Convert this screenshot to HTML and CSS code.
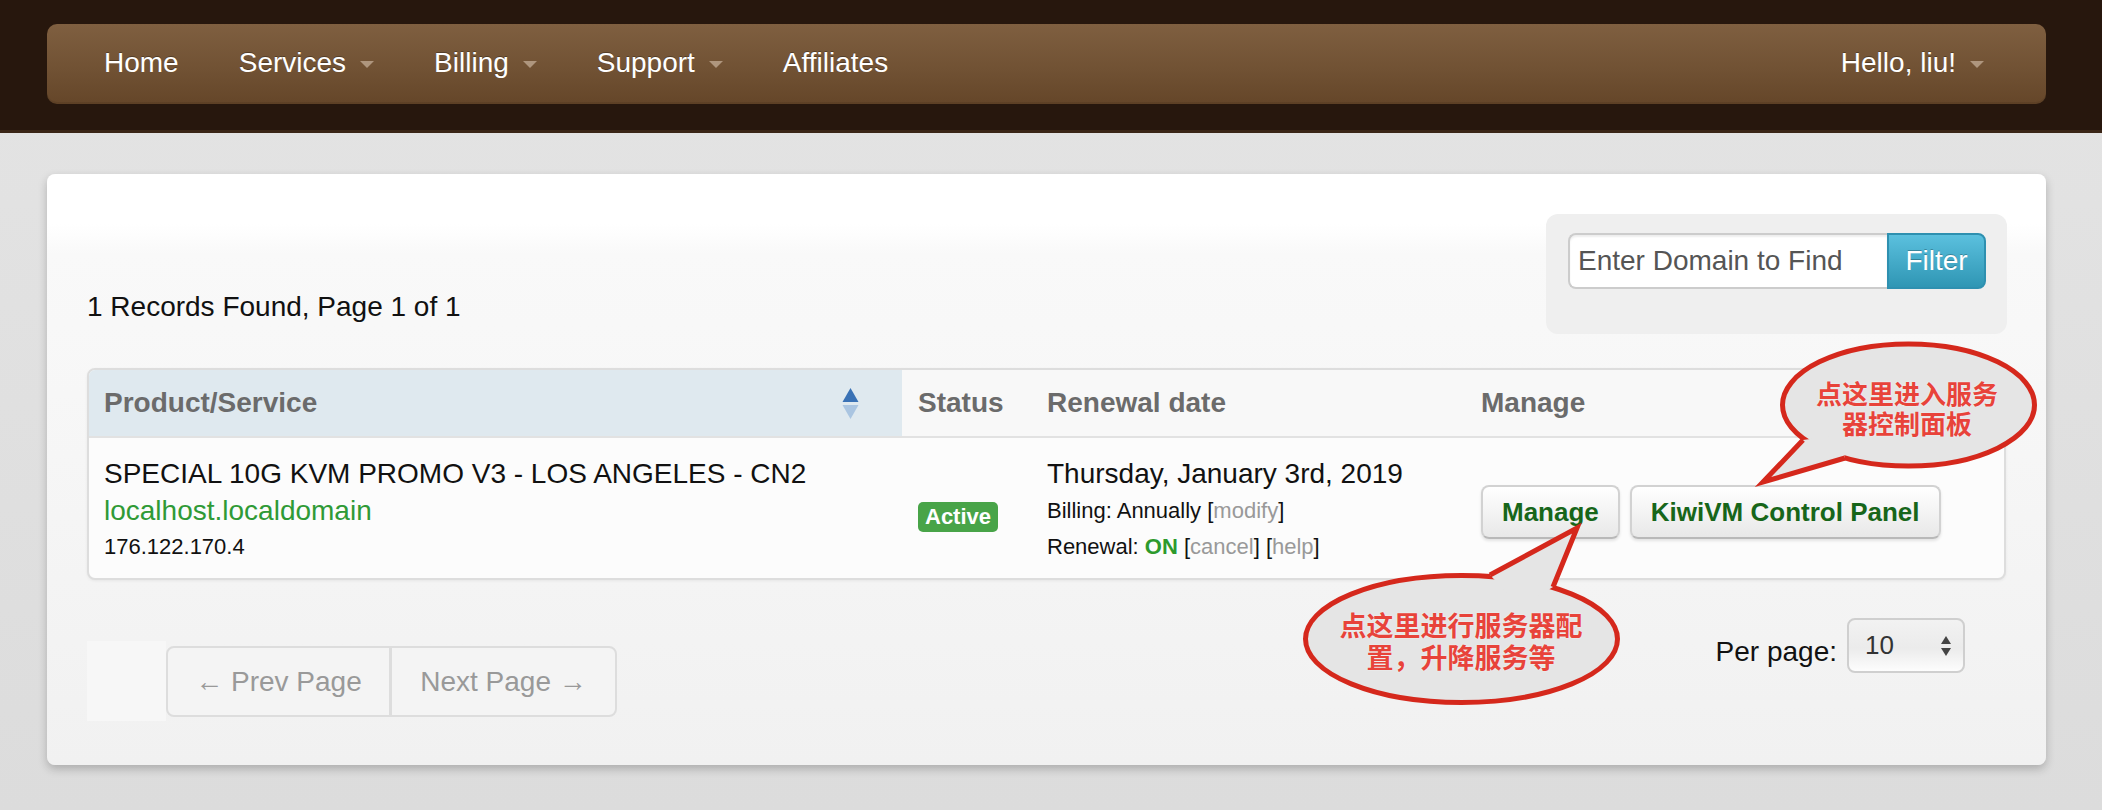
FILE: index.html
```html
<!DOCTYPE html>
<html>
<head>
<meta charset="utf-8">
<title>My Services</title>
<link rel="stylesheet" href="styles.css">
</head>
<body>
<header class="topbar">
  <nav class="navbar">
    <ul class="nav">
      <li><a>Home</a></li>
      <li><a>Services<span class="caret"></span></a></li>
      <li><a>Billing<span class="caret"></span></a></li>
      <li><a>Support<span class="caret"></span></a></li>
      <li><a>Affiliates</a></li>
    </ul>
    <ul class="nav">
      <li><a>Hello, liu!<span class="caret"></span></a></li>
    </ul>
  </nav>
</header>

<main class="card">
  <div class="toolbar">
    <p class="records">1 Records Found, Page 1 of 1</p>
    <div class="filter-box">
      <div class="filter">
        <span class="filter-input">Enter Domain to Find</span>
        <span class="filter-btn">Filter</span>
      </div>
    </div>
  </div>

  <table class="services">
    <colgroup>
      <col class="c-product"><col class="c-status"><col class="c-renewal"><col class="c-manage">
    </colgroup>
    <thead>
      <tr>
        <th class="sorted"><div class="th-inner"><span>Product/Service</span>
          <svg class="sort" width="21" height="33" viewBox="0 0 21 33"><path d="M10.5 1 L18.5 15 H2.5 Z" fill="#3a72b5"/><path d="M2.5 18 H18.5 L10.5 32 Z" fill="#aac5e1"/></svg></div></th>
        <th>Status</th>
        <th>Renewal date</th>
        <th>Manage</th>
      </tr>
    </thead>
    <tbody>
      <tr>
        <td class="product">
          <div class="l-big">SPECIAL 10G KVM PROMO V3 - LOS ANGELES - CN2</div>
          <div class="l-mid host">localhost.localdomain</div>
          <div class="l-small">176.122.170.4</div>
        </td>
        <td class="status"><span class="badge">Active</span></td>
        <td class="renewal">
          <div class="l-big">Thursday, January 3rd, 2019</div>
          <div class="l-mid small">Billing: Annually [<span class="muted">modify</span>]</div>
          <div class="l-small">Renewal: <b class="on">ON</b> [<span class="muted">cancel</span>] [<span class="muted">help</span>]</div>
        </td>
        <td class="manage">
          <div class="btns"><span class="btn">Manage</span><span class="btn">KiwiVM Control Panel</span></div>
        </td>
      </tr>
    </tbody>
  </table>

  <div class="footer-row">
    <div class="pager">
      <span class="pager-spacer"></span>
      <span class="pager-btn prev">← Prev Page</span>
      <span class="pager-btn next">Next Page →</span>
    </div>
    <div class="per-page">
      <span class="per-page-label">Per page:</span>
      <div class="select"><span>10</span>
        <svg width="12" height="22" viewBox="0 0 12 22"><path d="M6 1 L11 9 H1 Z" fill="#444"/><path d="M1 13 H11 L6 21 Z" fill="#444"/></svg>
      </div>
    </div>
  </div>
</main>

<div class="bubble bubble-1">
  <svg width="295" height="160" viewBox="0 0 295 160">
    <ellipse cx="158.5" cy="70" rx="126" ry="61" fill="#e5e5e5" stroke="#d5281c" stroke-width="5"/>
    <path d="M53 105 L13 147 L95 123 L90 100 Z" fill="#e5e5e5"/>
    <path d="M53 105 L13 147 L95 123" fill="none" stroke="#d5281c" stroke-width="5" stroke-linejoin="miter"/>
  </svg>
  <div class="bubble-text">点这里进入服务<br>器控制面板</div>
</div>

<div class="bubble bubble-2">
  <svg width="340" height="200" viewBox="0 0 340 200">
    <ellipse cx="166.5" cy="124" rx="156" ry="63.5" fill="#e5e5e5" stroke="#d5281c" stroke-width="5"/>
    <path d="M195 60 L282 13 L258 72 L225 92 Z" fill="#e5e5e5"/>
    <path d="M195 60 L282 13 L258 72" fill="none" stroke="#d5281c" stroke-width="5" stroke-linejoin="miter"/>
  </svg>
  <div class="bubble-text">点这里进行服务器配<br>置，升降服务等</div>
</div>
</body>
</html>
```

FILE: styles.css
```css
* { box-sizing: border-box; }
html, body { margin: 0; padding: 0; }
body {
  position: relative;
  width: 2102px;
  height: 810px;
  overflow: hidden;
  background: linear-gradient(#e4e4e4, #dcdcdc);
  font-family: "Liberation Sans", Arial, "Noto Sans CJK SC", sans-serif;
  color: #111;
}

/* ---------- top bar ---------- */
.topbar {
  height: 133px;
  background: #27170d;
  border-bottom: 3px solid #3a2516;
  padding: 24px 56px 0 47px;
}
.navbar {
  height: 80px;
  border-radius: 10px;
  background: linear-gradient(#7f5f40, #715234 55%, #654629);
  box-shadow: inset 0 -2px 0 rgba(0,0,0,0.08);
  display: flex;
  justify-content: space-between;
  padding: 0 32px 0 27px;
}
.nav { list-style: none; margin: 0; padding: 0; display: flex; }
.nav a {
  display: block;
  padding: 0 30px;
  font-size: 28px;
  line-height: 77px;
  color: #fff;
  text-shadow: 0 -1px 0 rgba(0,0,0,0.3);
}
.caret {
  display: inline-block;
  width: 0; height: 0;
  border-top: 7px solid rgba(215,195,175,0.6);
  border-left: 7px solid transparent;
  border-right: 7px solid transparent;
  margin-left: 14px;
  vertical-align: middle;
}

/* ---------- card ---------- */
.card {
  margin: 41px 56px 0 47px;
  height: 591px;
  border-radius: 8px;
  background: linear-gradient(#ffffff 0, #ffffff 50px, #f9f9f9 80px, #f7f7f7 220px, #f1f1f1 100%);
  box-shadow: 0 4px 10px rgba(0,0,0,0.22);
  padding: 40px 40px 0 40px;
}
.toolbar {
  display: flex;
  justify-content: space-between;
  align-items: flex-end;
  margin-bottom: 34px;
}
.records { margin: 0 0 7px; font-size: 28px; line-height: 40px; }
.filter-box {
  width: 461px;
  height: 120px;
  margin-right: -1px;
  background: #efefef;
  border-radius: 12px;
  padding: 19px 0 0 22px;
}
.filter { display: flex; }
.filter-input {
  width: 319px; height: 56px;
  border: 2px solid #cccccc;
  border-right: 0;
  border-radius: 8px 0 0 8px;
  background: #fff;
  box-shadow: inset 0 2px 2px rgba(0,0,0,0.07);
  font-size: 28px;
  line-height: 52px;
  padding-left: 8px;
  color: #555;
}
.filter-btn {
  width: 99px; height: 56px;
  border: 2px solid #2e90b0;
  border-radius: 0 8px 8px 0;
  background: linear-gradient(#5bc0de, #2f96b4);
  color: #fff;
  font-size: 28px;
  line-height: 52px;
  text-align: center;
  text-shadow: 0 -1px 0 rgba(0,0,0,0.25);
}

/* ---------- table ---------- */
.services {
  width: 1919px;
  border-collapse: separate;
  border-spacing: 0;
  border: 2px solid #dddddd;
  border-radius: 8px;
  table-layout: fixed;
  background: #fcfcfc;
  box-shadow: 0 1px 3px rgba(0,0,0,0.06);
}
.c-product { width: 813px; }
.c-status { width: 129px; }
.c-renewal { width: 434px; }
.c-manage { width: 539px; }
.services th {
  height: 68px;
  padding: 0 16px;
  text-align: left;
  font-size: 28px;
  font-weight: bold;
  color: #6b6b6b;
  background: #f8f8f8;
  border-bottom: 2px solid #e2e2e2;
  vertical-align: middle;
}
.services th:last-child { border-top-right-radius: 6px; }
.services th.sorted {
  background: #dfe9ef;
  border-top-left-radius: 6px;
  padding: 0 41px 0 15px;
}
.th-inner { display: flex; justify-content: space-between; align-items: center; }
.sort { display: block; }
.services td {
  height: 140px;
  padding: 17px 16px 13px;
  vertical-align: middle;
  font-size: 28px;
}
.services td.product { padding-left: 15px; }
.services td.status { padding-top: 27px; }
.services td.manage { padding-top: 21px; }
.l-big { line-height: 38px; font-size: 28px; }
.l-mid { line-height: 36px; font-size: 28px; }
.l-mid.small { font-size: 22px; }
.l-small { line-height: 36px; font-size: 22px; }
.host { color: #2f9a36; }
.muted { color: #999; }
.on { color: #2d9a2d; }
.badge {
  display: inline-block;
  height: 30px;
  padding: 0 7px;
  background: #48a448;
  color: #fff;
  font-weight: bold;
  font-size: 22px;
  line-height: 30px;
  border-radius: 5px;
}
.btns { display: flex; gap: 10px; }
.btn {
  display: inline-block;
  height: 54px;
  padding: 0 19px;
  border: 2px solid #d2d2d2;
  border-bottom-color: #b9b9b9;
  border-radius: 8px;
  background: linear-gradient(#ffffff, #e8e8e8);
  box-shadow: inset 0 2px 0 rgba(255,255,255,0.4), 0 2px 3px rgba(0,0,0,0.1);
  font-size: 26px;
  font-weight: bold;
  line-height: 50px;
  color: #17661a;
  white-space: nowrap;
}

/* ---------- footer ---------- */
.footer-row {
  display: flex;
  justify-content: space-between;
  align-items: flex-start;
}
.pager { display: flex; align-items: center; margin-top: 61px; }
.pager-spacer { width: 79px; height: 80px; background: #f7f7f7; }
.pager-btn {
  width: 225px;
  height: 71px;
  border: 2px solid #dddddd;
  background: #f4f4f4;
  color: #999;
  font-size: 28px;
  line-height: 67px;
  text-align: center;
}
.pager-btn.prev { border-radius: 8px 0 0 8px; }
.pager-btn.next { width: 226px; border-left-width: 1px; border-radius: 0 8px 8px 0; }
.per-page { display: flex; align-items: flex-start; margin-top: 38px; margin-right: 41px; }
.per-page-label { font-size: 28px; line-height: 40px; margin-top: 14px; margin-right: 10px; }
.select {
  width: 118px;
  height: 55px;
  border: 2px solid #cfcfcf;
  border-radius: 8px;
  background: linear-gradient(#f2f2f2, #ebebeb 55%, #fdfdfd);
  display: flex;
  align-items: center;
  justify-content: space-between;
  padding: 0 11px 0 16px;
  font-size: 26px;
  color: #333;
}
.select svg { display: block; }

/* ---------- annotation bubbles ---------- */
.bubble { position: absolute; z-index: 5; }
.bubble svg { display: block; }
.bubble-1 { left: 1750px; top: 335px; width: 295px; height: 160px; }
.bubble-2 { left: 1295px; top: 515px; width: 340px; height: 200px; }
.bubble-text {
  position: absolute;
  text-align: center;
  font-family: "Noto Sans CJK SC", "Liberation Sans", sans-serif;
  font-weight: bold;
  color: #e8433a;
  text-shadow: 0 0 2px rgba(255,255,255,0.7);
}
.bubble-1 .bubble-text { left: 37px; top: 43px; width: 240px; font-size: 26px; line-height: 30px; }
.bubble-2 .bubble-text { left: 26px; top: 94px; width: 280px; font-size: 27px; line-height: 32px; }
```
